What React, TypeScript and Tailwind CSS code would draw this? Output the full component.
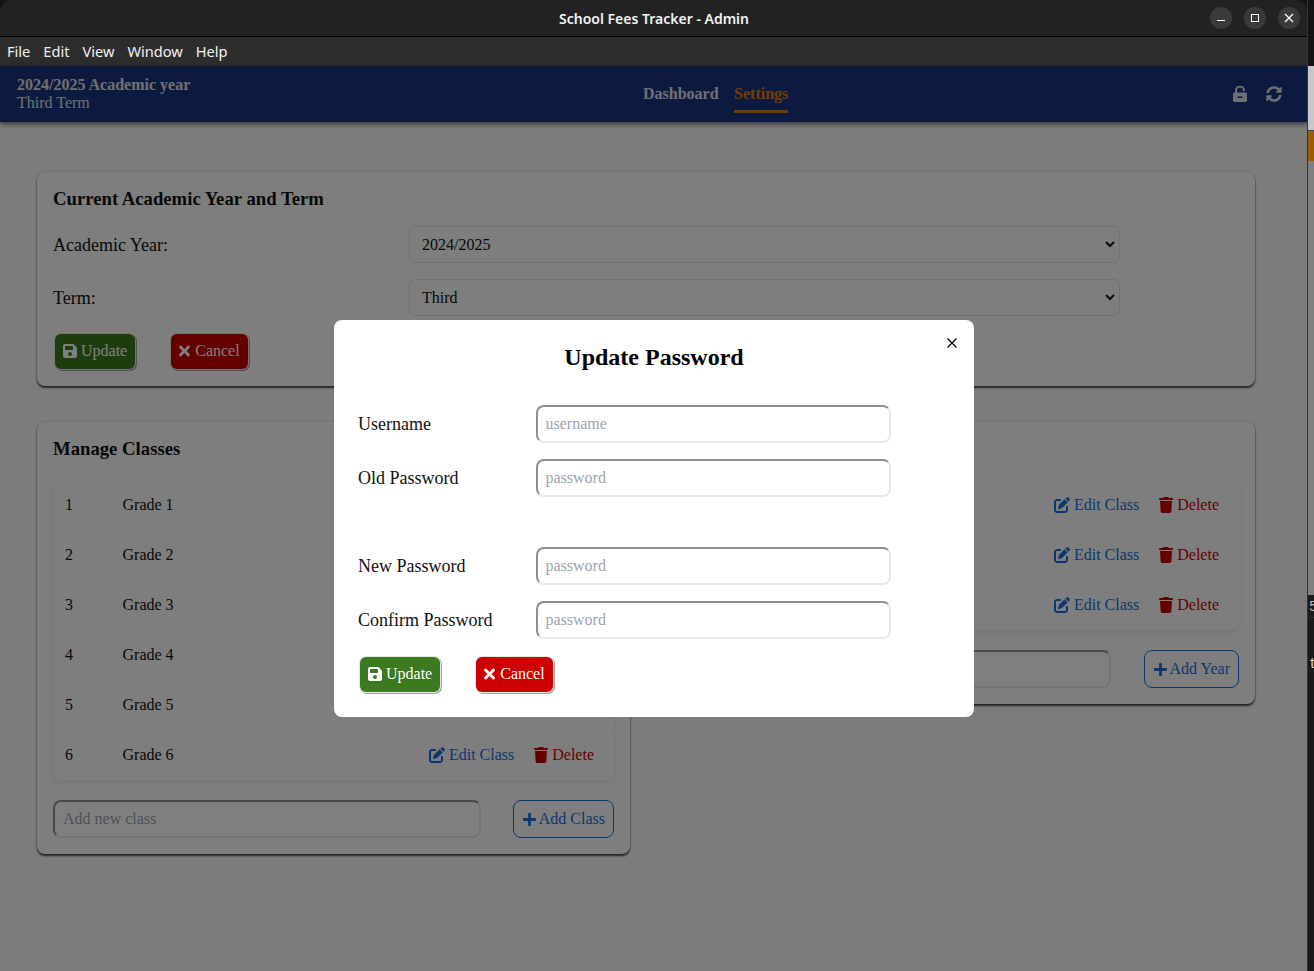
import { FaPlus, FaSyncAlt, FaTimes } from "react-icons/fa";
import { FaFloppyDisk, FaPenToSquare, FaTrash } from "react-icons/fa6";

const serif = "font-['Liberation_Serif',serif]";

function MenuBar() {
  return (
    <div className="flex h-[29px] items-center gap-[13px] bg-[#2d2d2d] pl-[7px] font-['Noto_Sans','Open_Sans',sans-serif] text-[14.6px] text-[#f2f2f2]">
      <span>File</span>
      <span>Edit</span>
      <span>View</span>
      <span>Window</span>
      <span>Help</span>
    </div>
  );
}

function TitleBar() {
  return (
    <div className="relative flex h-[37px] items-center justify-center rounded-t-[12px] border-b border-black bg-[#222222] pl-[1px]">
      <span className="font-['Noto_Sans',sans-serif] text-[14px] font-semibold text-[#f2f2f2]">School Fees Tracker - Admin</span>
      <div className="absolute top-[7px] right-[7px] flex gap-3">
        <div className="flex h-[22px] w-[22px] items-center justify-center rounded-full bg-[#3a3a3a]">
          <div className="mt-[4px] h-[1px] w-2 bg-white"></div>
        </div>
        <div className="flex h-[22px] w-[22px] items-center justify-center rounded-full bg-[#3a3a3a]">
          <div className="h-2 w-2 border border-white"></div>
        </div>
        <div className="flex h-[22px] w-[22px] items-center justify-center rounded-full bg-[#3a3a3a]">
          <svg width="10" height="10" viewBox="0 0 10 10" stroke="white" strokeWidth="1.3">
            <path d="M1 1l8 8M9 1l-8 8" />
          </svg>
        </div>
      </div>
    </div>
  );
}

function UnlockIcon() {
  return (
    <svg width="14" height="16" viewBox="0 0 14 16">
      <path d="M3 7V4.5a4 4 0 0 1 8 0V5" fill="none" stroke="#e0e0e0" strokeWidth="2" />
      <path
        fillRule="evenodd"
        fill="#e0e0e0"
        d="M1.5 6.5h11A1.5 1.5 0 0 1 14 8v6.5a1.5 1.5 0 0 1-1.5 1.5h-11A1.5 1.5 0 0 1 0 14.5V8a1.5 1.5 0 0 1 1.5-1.5zM4.5 10.5v1.5h5v-1.5z"
      />
    </svg>
  );
}

function NavBar() {
  return (
    <div className={`relative flex h-14 items-center justify-between bg-[#1a3480] pr-[25px] pl-[17px] shadow-[0_2px_5px_rgba(0,0,0,0.6)] ${serif}`}>
      <div className="mb-[1px]">
        <div className="text-base leading-[18px] font-bold text-[#e0e0e0]">2024/2025 Academic year</div>
        <div className="text-base leading-[18px] text-[#e0e0e0]">Third Term</div>
      </div>
      <div className="absolute top-0 left-[643px] flex h-14 gap-[15.5px] text-base font-bold">
        <div className="flex items-center text-[#e0e0e0]">Dashboard</div>
        <div className="relative flex items-center text-[#e67a00]">
          Settings
          <div className="absolute top-[44px] right-0 left-0 h-[3px] bg-[#e67a00]"></div>
        </div>
      </div>
      <div className="flex items-center gap-[19px] text-[#e0e0e0]">
        <UnlockIcon />
        <FaSyncAlt className="h-4 w-4" />
      </div>
    </div>
  );
}

function ActionButton({ kind }: { kind: "update" | "cancel" }) {
  const isUpdate = kind === "update";
  return (
    <button
      className={`flex h-[35px] items-center rounded-md px-2 pb-[2px] text-base text-white shadow-[0_0_0_1px_#e6e6e6,1px_1px_0_1px_#a0a0a0] ${isUpdate ? "gap-1 bg-[#3b7a1e]" : "gap-[5px] bg-[#cc0000]"}`}
    >
      {isUpdate ? <FaFloppyDisk className="h-4 w-[14px]" /> : <FaTimes className="h-4 w-[11px]" />}
      {isUpdate ? "Update" : "Cancel"}
    </button>
  );
}

function ButtonRow() {
  return (
    <div className="mt-[18px] flex gap-[36px] pl-[2px]">
      <ActionButton kind="update" />
      <ActionButton kind="cancel" />
    </div>
  );
}

function SelectRow({ label, value }: { label: string; value: string }) {
  return (
    <div className="flex items-center">
      <div className="w-[356px] text-lg text-[#111]">{label}</div>
      <div className="flex h-[37px] w-[711px] items-center justify-between rounded-md border border-[#e4e4e4] bg-[#fcfcfc] pr-[4px] pl-3 text-base text-[#111]">
        <span>{value}</span>
        <svg width="10" height="7" viewBox="0 0 10 7" fill="none" stroke="#111" strokeWidth="2">
          <path d="M1 1l4 4 4-4" />
        </svg>
      </div>
    </div>
  );
}

function ClassRow({ n, last }: { n: number; last?: boolean }) {
  return (
    <div className={`flex h-[50px] items-center pr-5 pl-3 text-base ${last ? "" : "border-b border-[#f6f6f6]"}`}>
      <span className="w-[57.5px] text-[#111]">{n}</span>
      <span className="flex-1 text-[#111]">Grade {n}</span>
      <span className="flex items-center gap-1 text-[#1a6fd8]">
        <FaPenToSquare className="h-4 w-4" /> Edit Class
      </span>
      <span className="ml-5 flex items-center gap-1 text-[#cc0000]">
        <FaTrash className="h-4 w-[14px]" /> Delete
      </span>
    </div>
  );
}

function AddRow({ placeholder, label, inputWidth }: { placeholder: string; label: string; inputWidth: string }) {
  return (
    <div className="mt-5 flex items-center justify-between">
      <div className={`flex h-[38px] items-center rounded-lg border-2 border-t-[#909090] border-r-[#e8e8e8] border-b-[#e8e8e8] border-l-[#909090] bg-white pl-2 text-base text-[#9ca3af] ${inputWidth}`}>
        {placeholder}
      </div>
      <button className="flex h-[38px] items-center gap-[2px] rounded-lg border border-[#1a6fd8] px-2 text-base text-[#1a6fd8]">
        <FaPlus className="h-[15px] w-[15px]" /> {label}
      </button>
    </div>
  );
}

function ModalField({ label, placeholder, className }: { label: string; placeholder: string; className?: string }) {
  return (
    <div className={`flex items-center ${className ?? ""}`}>
      <label className="w-[178px] text-lg text-[#111]">{label}</label>
      <div className="flex h-[38px] w-[355px] items-center rounded-lg border-2 border-t-[#909090] border-r-[#e8e8e8] border-b-[#e8e8e8] border-l-[#909090] bg-white pl-[7.5px] text-base text-[#9ca3af]">
        {placeholder}
      </div>
    </div>
  );
}

function CloseIcon() {
  return (
    <svg className="absolute top-[17px] right-[16px]" width="12" height="12" viewBox="0 0 12 12" stroke="#000" strokeWidth="1.2">
      <path d="M1.5 1.5l9 9M10.5 1.5l-9 9" />
    </svg>
  );
}

function Modal() {
  return (
    <div className={`absolute top-[320px] left-[334px] h-[397px] w-[640px] rounded-lg bg-white px-6 ${serif}`}>
      <CloseIcon />
      <h2 className="pt-[21px] text-center text-2xl leading-[32px] font-bold text-black">Update Password</h2>
      <ModalField className="mt-8" label="Username" placeholder="username" />
      <ModalField className="mt-4" label="Old Password" placeholder="password" />
      <ModalField className="mt-[50px]" label="New Password" placeholder="password" />
      <ModalField className="mt-4" label="Confirm Password" placeholder="password" />
      <ButtonRow />
    </div>
  );
}

// sliver of whatever window sits behind the app
function BehindStrip() {
  return (
    <div className="flex h-[971px] w-[7px] flex-col overflow-hidden border-l border-[#333] font-['Liberation_Mono',monospace] text-[14px] text-[#b8b8b8]">
      <div className="h-[66px] bg-[#141414]"></div>
      <div className="h-[64px] bg-[#c8c8c8]"></div>
      <div className="h-[1px] bg-[#3a4a66]"></div>
      <div className="h-[30px] bg-[#9a5d00]"></div>
      <div className="h-[434px] bg-[#808080]"></div>
      <div className="flex-1 bg-[#1a1a1a] pl-[1px]">
        <div className="mt-[2px] h-5 leading-5">5</div>
        <div className="h-[1px] bg-[#333]"></div>
        <div className="mt-[36px] leading-5 text-[#e8dcc8]">t</div>
      </div>
    </div>
  );
}

export default function App() {
  return (
    <div className={`flex h-[971px] w-[1314px] overflow-hidden bg-[#141414] ${serif}`}>
      <div className="relative h-[971px] w-[1307px] shrink-0 overflow-hidden rounded-t-[12px]">
        <TitleBar />
        <MenuBar />
        <div className="relative h-[905px] bg-[#f8f8f8]">
          <NavBar />
          <div className="pt-[50px] pl-[37px]">
            <div className="h-[214px] w-[1218px] rounded-lg bg-[#fcfcfc] px-4 pt-[14px] shadow-[0_2px_2px_rgba(0,0,0,0.7),0_0_2px_rgba(0,0,0,0.25)]">
              <h3 className="text-[18.72px] leading-[26px] font-bold text-[#111]">Current Academic Year and Term</h3>
              <div className="mt-[14px]">
                <SelectRow label="Academic Year:" value="2024/2025" />
              </div>
              <div className="mt-4">
                <SelectRow label="Term:" value="Third" />
              </div>
              <ButtonRow />
            </div>
            <div className="mt-9 flex items-start gap-[24px]">
              <div className="w-[593px] rounded-lg bg-[#fcfcfc] px-4 pt-[14px] pb-4 shadow-[0_2px_2px_rgba(0,0,0,0.7),0_0_2px_rgba(0,0,0,0.25)]">
                <h3 className="text-[18.72px] leading-[26px] font-bold text-[#111]">Manage Classes</h3>
                <div className="mt-[18px] rounded-lg shadow-[0_2px_6px_rgba(0,0,0,0.08)]">
                  {[1, 2, 3, 4, 5, 6].map((n) => (
                    <ClassRow key={n} n={n} last={n === 6} />
                  ))}
                </div>
                <AddRow placeholder="Add new class" label="Add Class" inputWidth="w-[428px]" />
              </div>
              <div className="w-[601px] rounded-lg bg-[#fcfcfc] px-4 pt-[14px] pb-4 shadow-[0_2px_2px_rgba(0,0,0,0.7),0_0_2px_rgba(0,0,0,0.25)]">
                <h3 className="text-[18.72px] leading-[26px] font-bold text-[#111]">Manage Years</h3>
                <div className="mt-[18px] rounded-lg shadow-[0_2px_6px_rgba(0,0,0,0.08)]">
                  {[1, 2, 3].map((n) => (
                    <ClassRow key={n} n={n} last={n === 3} />
                  ))}
                </div>
                <AddRow placeholder="Add new year" label="Add Year" inputWidth="w-[441px]" />
              </div>
            </div>
          </div>
          <div className="absolute inset-0 bg-black/50"></div>
        </div>
        <Modal />
      </div>
      <BehindStrip />
    </div>
  );
}
